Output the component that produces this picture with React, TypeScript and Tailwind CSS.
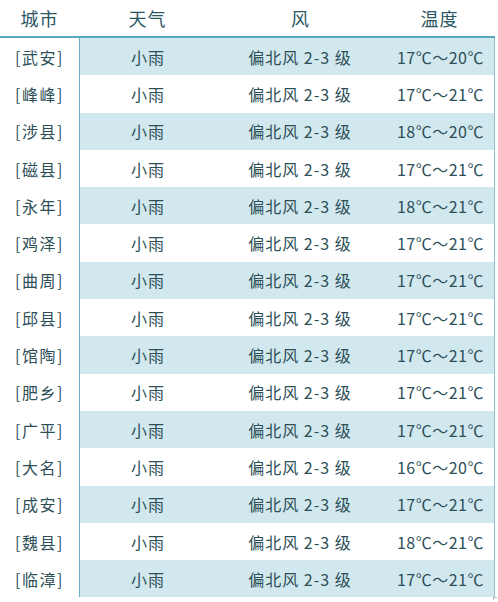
const rows: [string, string][] = [
  ["武安", "17℃～20℃"],
  ["峰峰", "17℃～21℃"],
  ["涉县", "18℃～20℃"],
  ["磁县", "17℃～21℃"],
  ["永年", "18℃～21℃"],
  ["鸡泽", "17℃～21℃"],
  ["曲周", "17℃～21℃"],
  ["邱县", "17℃～21℃"],
  ["馆陶", "17℃～21℃"],
  ["肥乡", "17℃～21℃"],
  ["广平", "17℃～21℃"],
  ["大名", "16℃～20℃"],
  ["成安", "17℃～21℃"],
  ["魏县", "18℃～21℃"],
  ["临漳", "17℃～21℃"],
];

export default function App() {
  return (
    <div
      className="w-[498px] h-[602px] bg-white text-[#2d4f58] overflow-hidden"
      style={{ fontFamily: '"Microsoft YaHei", "Noto Sans CJK SC", sans-serif' }}
    >
      <div className="w-[495px]">
        <div className="grid grid-cols-[79px_137px_168px_111px] h-[36px] items-center text-[18px] text-[#2a5563]">
          <div className="text-center tracking-[1px]">城市</div>
          <div className="text-center tracking-[1px]">天气</div>
          <div className="text-center">风</div>
          <div className="text-center tracking-[1px]">温度</div>
        </div>
        <div className="h-[2px] bg-[#5aa8c3]" />
        <div className="flex flex-col">
          {rows.map(([city, temp], i) => (
            <div
              key={city}
              className="grid grid-cols-[79px_1px_136px_168px_110px_1px] h-[37.3px] items-center text-[16px]"
            >
              <div className="text-center bg-white tracking-[1.5px]">[{city}]</div>
              <div className="h-full bg-[#6fb0c4]" />
              <div
                className={
                  "h-full flex items-center justify-center tracking-[1px] " +
                  (i % 2 === 0 ? "bg-[#d2e8ef]" : "bg-white")
                }
              >
                小雨
              </div>
              <div
                className={
                  "h-full flex items-center justify-center tracking-[1px] " +
                  (i % 2 === 0 ? "bg-[#d2e8ef]" : "bg-white")
                }
              >
                偏北风 2-3 级
              </div>
              <div
                className={
                  "h-full flex items-center justify-center pl-[3px] tracking-[0.5px] " +
                  (i % 2 === 0 ? "bg-[#d2e8ef]" : "bg-white")
                }
              >
                {temp}
              </div>
              <div className="h-full bg-[#8cc0d0]" />
            </div>
          ))}
        </div>
        <div className="flex justify-end pr-0">
          <div className="w-[4px] h-[3px] border-l border-t border-[#bbbbbb] mr-[-2px]" />
        </div>
      </div>
    </div>
  );
}
